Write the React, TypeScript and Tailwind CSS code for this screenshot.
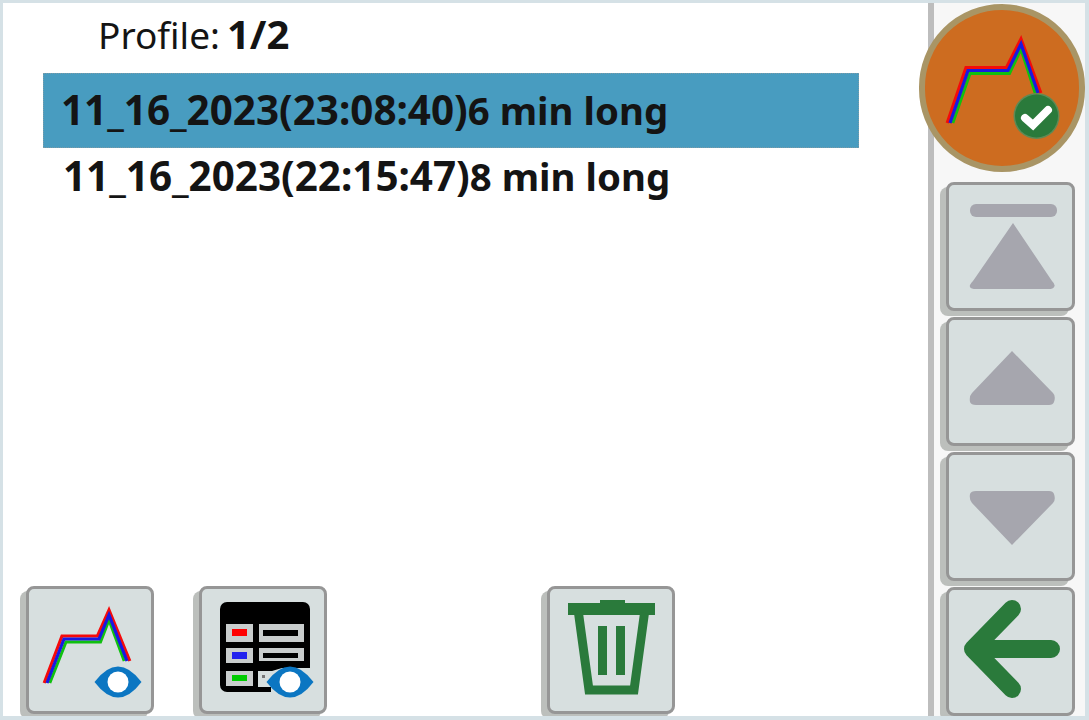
import React from "react";

type Pt = [number, number];

function line(points: Pt[], sign: number) {
  const offsets: Pt[] = [
    [-2.8, 0],
    [-2, -3],
    [-1.5, -3],
    [0, -5],
    [2.8, 0],
  ];
  return points
    .map((p, i) => `${i === 0 ? "M" : "L"}${p[0] + offsets[i][0] * sign} ${p[1] + offsets[i][1] * sign}`)
    .join("");
}

function Curve({ points }: { points: Pt[] }) {
  return (
    <>
      <path d={line(points, 1)} fill="none" stroke="#f50a0a" strokeWidth="3.2" />
      <path d={line(points, -1)} fill="none" stroke="#10c010" strokeWidth="3" />
      <path d={line(points, 0)} fill="none" stroke="#1a1ae0" strokeWidth="3.2" />
    </>
  );
}

function Eye({ cx, cy }: { cx: number; cy: number }) {
  return (
    <>
      <path
        d={`M${cx - 23.5} ${cy}Q${cx} ${cy - 31} ${cx + 23.5} ${cy}Q${cx} ${cy + 31} ${cx - 23.5} ${cy}Z`}
        fill="#0b76c2"
      />
      <circle cx={cx} cy={cy} r="10.5" fill="#ffffff" />
    </>
  );
}

function Btn({
  children,
  viewBox,
  wide,
}: {
  children: React.ReactNode;
  viewBox: string;
  wide?: boolean;
}) {
  return (
    <div
      className={
        wide
          ? "h-[129px] w-[129px] shrink-0 rounded-[8px] border-[3px] border-[#969696] bg-[#d7dfdf] shadow-[-6px_5px_0_#bcbfbc]"
          : "h-[128px] w-[128px] shrink-0 rounded-[8px] border-[3px] border-[#969696] bg-[#d7dfdf] shadow-[-6px_5px_0_#bcbfbc]"
      }
    >
      <svg
        viewBox={viewBox}
        className={wide ? "-m-[3px] block h-[129px] w-[129px]" : "-m-[3px] block h-[128px] w-[128px]"}
      >
        {children}
      </svg>
    </div>
  );
}

const gray = "#a6a6ae";
const green = "#2a7a3b";

export default function App() {
  return (
    <div
      className="flex h-[720px] w-[1089px] overflow-hidden border-b-[4px] border-l-[3px] border-r-[4px] border-t-[3px] border-[#d5e1e6] bg-white text-[#141414]"
      style={{ fontFamily: '"Noto Sans", "Open Sans", sans-serif' }}
    >
      <main className="flex w-[925px] shrink-0 flex-col bg-white">
        <div className="flex h-[70px] items-baseline gap-[7px] pl-[95px] pt-[11px] leading-none">
          <span className="text-[37px]">Profile:</span>
          <span className="text-[40px] font-bold">1/2</span>
        </div>
        <div className="ml-[40px] w-[816px] text-[40.4px] font-bold leading-none">
          <div className="flex h-[75px] items-baseline bg-[#489cc0] pl-[18px] pt-[17px] outline-1 -outline-offset-1 outline-dotted outline-[#7d9aa6]">
            <span>11_16_2023(23:08:40)</span>
            <span className="text-[38.4px]">6 min long</span>
          </div>
          <div className="flex h-[60px] items-baseline pl-[20px] pt-[8px]">
            <span>11_16_2023(22:15:47)</span>
            <span className="text-[38.4px]">8 min long</span>
          </div>
        </div>
        <div className="mt-auto flex items-end pb-[2px] pl-[23px]">
          <Btn viewBox="26 587 128 128">
            <Curve
              points={[
                [47, 684],
                [64, 640],
                [99, 640],
                [109, 616],
                [127, 662],
              ]}
            />
            <Eye cx={118} cy={683} />
          </Btn>
          <div className="ml-[45px]">
            <Btn viewBox="199 587 128 128">
              <rect x="220" y="603" width="90" height="90" rx="7" fill="#000" />
              <rect x="226" y="625" width="27" height="18" fill="#c9cdcd" />
              <rect x="226" y="649" width="27" height="15" fill="#c9cdcd" />
              <rect x="226" y="672" width="27" height="15" fill="#c9cdcd" />
              <rect x="259" y="625" width="45" height="18" fill="#c9cdcd" />
              <rect x="259" y="649" width="45" height="13" fill="#c9cdcd" />
              <rect x="232" y="630" width="15" height="7" fill="#f00" />
              <rect x="232" y="653" width="15" height="7" fill="#2222ee" />
              <rect x="232" y="676" width="15" height="6" fill="#0c0" />
              <rect x="263" y="631" width="35" height="6" fill="#000" />
              <rect x="263" y="654" width="35" height="5" fill="#000" />
              <path d="M258 672H272L282 669H312V700H271V688H258Z" fill="#d7dfdf" />
              <rect x="262" y="676" width="3" height="3" fill="#777" />
              <Eye cx={290} cy={683} />
            </Btn>
          </div>
          <div className="ml-[220px]">
            <Btn viewBox="547 587 128 128">
              <path d="M568 604H600V601H625V604H655V616H568Z" fill={green} />
              <path d="M578.5 614L589 691H634L644.5 614" fill="none" stroke={green} strokeWidth="9" />
              <rect x="598" y="627" width="9" height="49" fill={green} />
              <rect x="616" y="627" width="9" height="49" fill={green} />
            </Btn>
          </div>
        </div>
      </main>

      <div className="w-[6px] shrink-0 bg-[#bdbdbd]" />

      <aside className="relative flex w-[151px] shrink-0 flex-col bg-[#f7f7f7]">
        <div className="-ml-[15px] mt-[1px] h-[168px] w-[166px] shrink-0 rounded-full border-[6px] border-[#a99565] bg-[#cd6c20]">
          <svg viewBox="925 7 154 156" className="block h-[156px] w-[154px]">
            <Curve
              points={[
                [950, 120],
                [968, 67.5],
                [1008, 67.5],
                [1021, 41],
                [1038, 90],
              ]}
            />
            <circle cx="1036.5" cy="113" r="23" fill="#5f8a55" />
            <circle cx="1036.5" cy="113" r="21.5" fill={green} />
            <path d="M1025 115L1033 122L1048 107" fill="none" stroke="#fff" strokeWidth="8" strokeLinecap="round" />
          </svg>
        </div>
        <div className="ml-[12px] mt-[10px] flex flex-col gap-[6px]">
          <Btn wide viewBox="946 182 129 129">
            <rect x="970" y="204" width="87" height="13" rx="6" fill={gray} />
            <path
              d="M1013 223L1052 281Q1056 285 1054 287Q1053 289 1049 289H976Q971 289 970 287Q969 285 973 281Z"
              fill={gray}
            />
          </Btn>
          <Btn wide viewBox="946 317 129 129">
            <path
              d="M1012 351L1053 393Q1056 396 1054 402Q1053 405 1049 405H976Q971 405 970 402Q969 396 972 393Z"
              fill={gray}
            />
          </Btn>
          <Btn wide viewBox="946 452 129 129">
            <path
              d="M1012 545L1053 503Q1056 500 1054 494Q1053 491 1049 491H976Q971 491 970 494Q969 500 972 503Z"
              fill={gray}
            />
          </Btn>
          <Btn wide viewBox="946 587 129 129">
            <path
              d="M1051 649H975M1012 609L973 649L1012 689"
              fill="none"
              stroke={green}
              strokeWidth="18"
              strokeLinecap="round"
              strokeLinejoin="round"
            />
          </Btn>
        </div>
      </aside>
    </div>
  );
}
